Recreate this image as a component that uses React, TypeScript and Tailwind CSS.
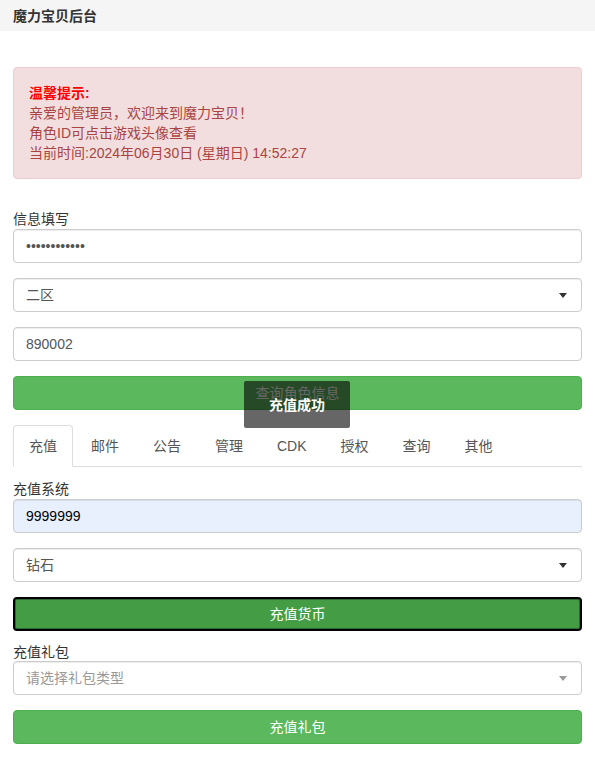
import React from 'react';

const font = { fontFamily: '"Liberation Sans", "Noto Sans CJK SC", sans-serif' };

const inputCls =
  'block w-full h-[34px] px-3 border border-[#ccc] rounded-[4px] text-[14px] text-[#555] shadow-[inset_0_1px_1px_rgba(0,0,0,0.075)] flex items-center';

function Caret({ light = false }: { light?: boolean }) {
  return (
    <svg width="8" height="5" viewBox="0 0 8 5" className="ml-auto">
      <path d="M0 0h8L4 5z" fill={light ? '#999' : '#333'} />
    </svg>
  );
}

function SelectBox({ value, placeholder = false }: { value: string; placeholder?: boolean }) {
  return (
    <div className={`${inputCls} pr-[14px] bg-white`}>
      <span className={placeholder ? 'text-[#999]' : 'text-[#555]'}>{value}</span>
      <Caret light={placeholder} />
    </div>
  );
}

function GreenButton({ label, focused = false }: { label: string; focused?: boolean }) {
  return (
    <button
      className={`w-full h-[34px] rounded-[4px] text-white text-[14px] ${
        focused ? 'bg-[#449d44] border-2 border-black shadow-[inset_0_0_0_1px_#2d6a2d]' : 'bg-[#5cb85c] border border-[#4cae4c]'
      }`}
    >
      {label}
    </button>
  );
}

const tabs = ['充值', '邮件', '公告', '管理', 'CDK', '授权', '查询', '其他'];

export default function App() {
  return (
    <div className="min-h-[773px] bg-white relative text-[#333] text-[14px] leading-[20px]" style={font}>
      {/* Header */}
      <div className="h-[31px] bg-[#f5f5f5] px-[13px] flex items-center font-bold text-[14px] text-[#333]">
        魔力宝贝后台
      </div>

      <div className="px-[13px] pt-[36px]">
        {/* Alert */}
        <div className="bg-[#f2dede] border border-[#ebccd1] rounded-[4px] px-[15px] py-[15px] text-[#a94442]">
          <div className="font-bold text-[#ff0000]">温馨提示:</div>
          <div>亲爱的管理员，欢迎来到魔力宝贝！</div>
          <div>角色ID可点击游戏头像查看</div>
          <div>当前时间:2024年06月30日 (星期日) 14:52:27</div>
        </div>

        {/* Info form */}
        <div className="mt-[31px] leading-[19px] text-[#333]">信息填写</div>
        <div className={`${inputCls} bg-white text-[#555]`}>••••••••••••</div>
        <div className="mt-[15px]">
          <SelectBox value="二区" />
        </div>
        <div className={`${inputCls} mt-[15px] bg-white`}>890002</div>
        <div className="mt-[15px]">
          <GreenButton label="查询角色信息" />
        </div>

        {/* Tabs */}
        <div className="mt-[15px] flex border-b border-[#ddd]">
          {tabs.map((t, i) => (
            <div
              key={t}
              className={`px-[15px] py-[10px] mr-[2px] -mb-px border rounded-t-[4px] ${
                i === 0 ? 'border-[#ddd] border-b-white bg-white text-[#555]' : 'border-transparent text-[#555]'
              }`}
            >
              {t}
            </div>
          ))}
        </div>

        {/* Recharge */}
        <div className="mt-[13px] leading-[19px]">充值系统</div>
        <div className={`${inputCls} bg-[#e8f0fe] text-black`}>9999999</div>
        <div className="mt-[15px]">
          <SelectBox value="钻石" />
        </div>
        <div className="mt-[15px]">
          <GreenButton label="充值货币" focused />
        </div>

        <div className="mt-[12px] leading-[18px]">充值礼包</div>
        <SelectBox value="请选择礼包类型" placeholder />
        <div className="mt-[15px]">
          <GreenButton label="充值礼包" />
        </div>
      </div>

      {/* Toast */}
      <div className="absolute left-[244px] top-[381px] w-[106px] h-[47px] bg-black/60 rounded-[2px] flex items-center justify-center text-white font-bold text-[14px]">
        充值成功
      </div>
    </div>
  );
}
